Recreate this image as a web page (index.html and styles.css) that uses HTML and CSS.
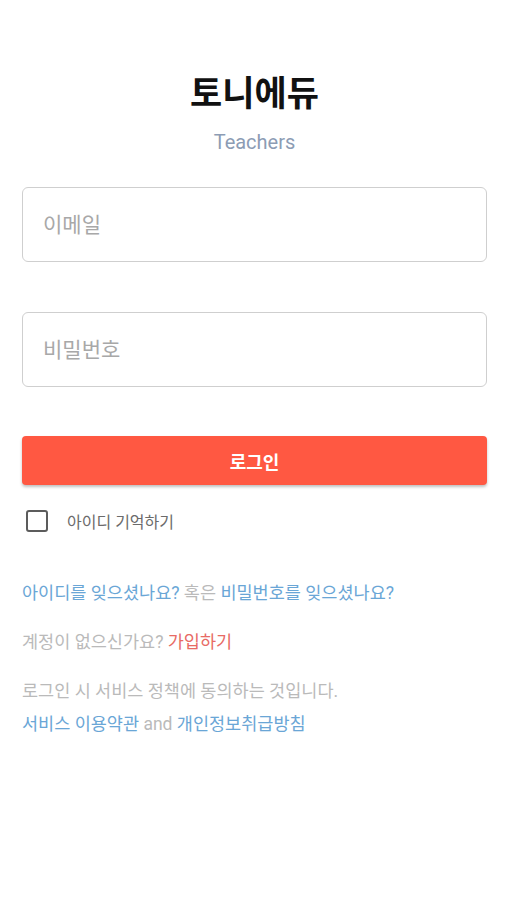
FILE: index.html
```html
<!DOCTYPE html>
<html lang="ko">
  <head>
    <meta charset="utf-8" />
    <title>토니에듀 Teachers</title>
    <link rel="stylesheet" href="styles.css">
  </head>
  <body>
    <div class="container">
      <div class="header">
        <h1 class="title">토니에듀</h1>
        <div class="subtitle">Teachers</div>
      </div>

      <div class="form">
        <input type="email" class="field" placeholder="이메일" />
        <input type="password" class="field" placeholder="비밀번호" />
        <button class="button-login">로그인</button>
      </div>

      <label class="remember">
        <span class="checkbox"></span>
        <span>아이디 기억하기</span>
      </label>

      <p class="line forgot">
        <a href="#" class="link">아이디를 잊으셨나요?</a> 혹은
        <a href="#" class="link">비밀번호를 잊으셨나요?</a>
      </p>

      <p class="line signup">
        계정이 없으신가요? <a href="#" class="link-red">가입하기</a>
      </p>

      <div class="policy">
        <p class="line">로그인 시 서비스 정책에 동의하는 것입니다.</p>
        <p class="line">
          <a href="#" class="link">서비스 이용약관</a> and
          <a href="#" class="link">개인정보취급방침</a>
        </p>
      </div>
    </div>
  </body>
</html>
```

FILE: styles.css
```css
:root {
  --primary-color: #ff5842;
  --link-color: #6aa6d6;
  --red-color: #e86a64;
  --border-color: #cfcfcf;
  --text-muted: #bababa;
  --text-label: #6b6b6b;
}

body {
  margin: 0;
  background-color: white;
  font-family: Roboto, "Noto Sans CJK KR", sans-serif;
}

.container {
  padding: 0 19px 0 22px;
}

.header {
  display: flex;
  flex-direction: column;
  align-items: center;
  padding-top: 72px;
}

.title {
  margin: 0;
  font-size: 35px;
  font-weight: 700;
  line-height: 46px;
  color: #111;
}

.subtitle {
  margin-top: 12px;
  font-size: 20px;
  line-height: 24px;
  color: #8c9cb4;
}

.form {
  display: flex;
  flex-direction: column;
  gap: 50px;
  margin-top: 33px;
}

.field {
  box-sizing: border-box;
  width: 100%;
  height: 75px;
  padding: 0 20px;
  border: 1.5px solid var(--border-color);
  border-radius: 6px;
  font-family: inherit;
  font-size: 21px;
  color: #333;
  outline: none;
}

.field::placeholder {
  color: #a8a8a8;
}

.button-login {
  height: 49px;
  margin-top: -1px;
  border: none;
  border-radius: 4px;
  background-color: var(--primary-color);
  color: white;
  font-family: inherit;
  font-size: 18px;
  font-weight: 700;
  box-shadow: 0 2px 3px rgba(0, 0, 0, 0.25);
}

.remember {
  display: flex;
  align-items: center;
  gap: 19px;
  margin-top: 24px;
  padding-left: 4px;
  font-size: 16px;
  color: var(--text-label);
}

.checkbox {
  box-sizing: border-box;
  width: 22px;
  height: 22px;
  border: 2px solid #5c5c5c;
  border-radius: 3px;
}

.line {
  margin: 0;
  font-size: 17.5px;
  line-height: 24px;
  color: var(--text-muted);
}

.forgot {
  margin-top: 48px;
}

.signup {
  margin-top: 25px;
}

.policy {
  display: flex;
  flex-direction: column;
  gap: 9px;
  margin-top: 25px;
}

.link {
  color: var(--link-color);
  text-decoration: none;
}

.link-red {
  color: var(--red-color);
  text-decoration: none;
}
```
